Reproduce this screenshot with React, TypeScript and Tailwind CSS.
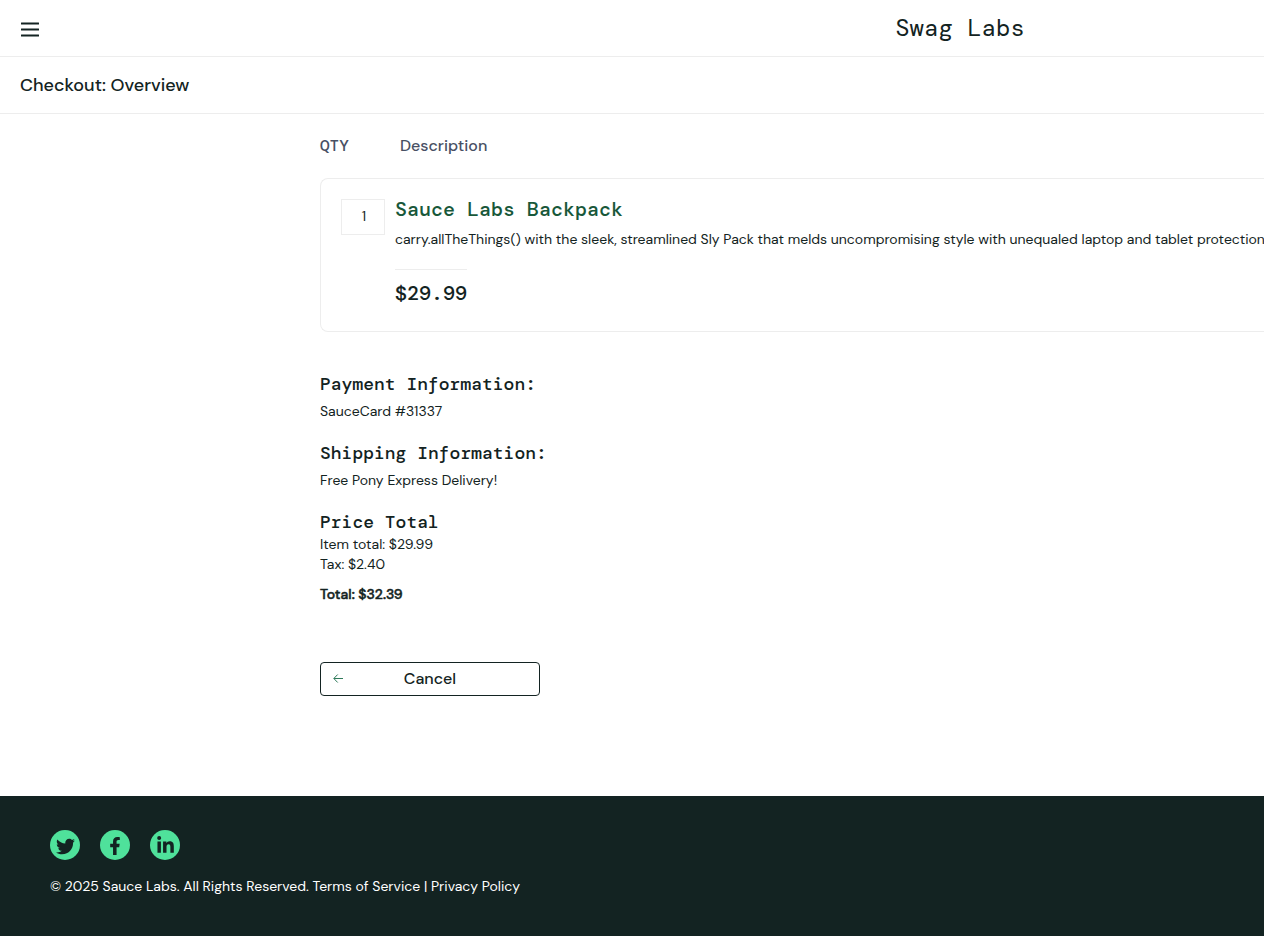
import { FaFacebookF, FaLinkedinIn, FaTwitter } from "react-icons/fa";

const mono = "font-['DM_Mono','Liberation_Mono',monospace]";

const socials = [
  { label: "Twitter", href: "#twitter", icon: <FaTwitter size={19} className="mt-0.5" /> },
  { label: "Facebook", href: "#facebook", icon: <FaFacebookF size={18} className="mt-0.5" /> },
  { label: "LinkedIn", href: "#linkedin", icon: <FaLinkedinIn size={19} /> },
];

function Header() {
  return (
    <header>
      <div className="grid h-[57px] grid-cols-2 items-center border-b border-[#ededed]">
        <button type="button" aria-label="Open Menu" className="mt-0.5 ml-5 w-5">
          <svg viewBox="0 0 20 16" className="h-4 w-5" fill="#132322" aria-hidden="true">
            <rect x="1" y="1.4" width="18" height="2.2" rx="0.4" />
            <rect x="1" y="7.4" width="18" height="2.2" rx="0.4" />
            <rect x="1" y="13.4" width="18" height="2.2" rx="0.4" />
          </svg>
        </button>
        <div className={`${mono} pl-6 text-center text-2xl`}>Swag Labs</div>
      </div>
      <div className="flex h-[57px] items-center border-b border-[#ededed] px-5">
        <h1 className="text-lg font-medium">Checkout: Overview</h1>
      </div>
    </header>
  );
}

function CartItem() {
  return (
    <article className="flex gap-2.5 overflow-hidden rounded-l-lg border border-r-0 border-[#ededed] py-5 pl-5">
      <div className="flex h-9 w-11 shrink-0 items-center justify-center border border-[#ededed] pb-0.5 pl-0.5 text-sm">
        1
      </div>
      <div className="min-w-0">
        <a href="#item" className={`${mono} block text-xl leading-5 font-medium text-[#18583a]`}>
          Sauce Labs Backpack
        </a>
        <p className="mt-2.5 text-sm leading-5 whitespace-nowrap">
          carry.allTheThings() with the sleek, streamlined Sly Pack that melds uncompromising style with unequaled laptop
          and tablet protection
        </p>
        <div
          className={`${mono} mt-5 w-fit border-t border-[#ededed] pt-2.5 pb-[5px] text-xl leading-[26px] font-medium`}
        >
          $29.99
        </div>
      </div>
    </article>
  );
}

function Summary() {
  const heading = `${mono} text-lg leading-5 font-medium`;
  return (
    <section className="pt-[42px] text-sm leading-5">
      <h2 className={heading}>Payment Information:</h2>
      <p className="mt-[7px]">SauceCard #31337</p>
      <h2 className={`${heading} mt-[22px]`}>Shipping Information:</h2>
      <p className="mt-[7px]">Free Pony Express Delivery!</p>
      <h2 className={`${heading} mt-[22px]`}>Price Total</h2>
      <p className="mt-0.5">Item total: $29.99</p>
      <p>Tax: $2.40</p>
      <p className="mt-2.5 font-medium [-webkit-text-stroke:0.5px_currentColor]">Total: $32.39</p>
    </section>
  );
}

export default function App() {
  return (
    <div className="flex min-h-screen flex-col bg-white font-['DM_Sans',Inter,sans-serif] text-[#132322]">
      <Header />
      <main className="flex-1 pb-[100px] pl-80">
        <div className="flex h-16 items-center font-medium text-[#485064]">
          <span className={`${mono} w-20`}>QTY</span>
          <span>Description</span>
        </div>
        <CartItem />
        <Summary />
        <button
          type="button"
          className="mt-[58px] grid h-[34px] w-[220px] grid-cols-[1fr_auto_1fr] items-center rounded border border-[#132322] px-3 font-medium"
        >
          <svg viewBox="0 0 10 10" className="h-2.5 w-2.5" fill="none" stroke="#2f7a5a" strokeWidth="1" aria-hidden="true">
            <path d="M10 4.5H1M4.7.5.8 4.5l3.9 4" />
          </svg>
          Cancel
        </button>
      </main>
      <footer className="h-[140px] bg-[#132322] px-[50px] pt-[34px] text-white">
        <ul className="flex gap-5">
          {socials.map((s) => (
            <li key={s.label}>
              <a
                href={s.href}
                aria-label={s.label}
                className="flex h-[30px] w-[30px] items-center justify-center rounded-full bg-[#4fe19b] text-[#132322]"
              >
                {s.icon}
              </a>
            </li>
          ))}
        </ul>
        <p className="mt-3 text-sm leading-7">
          © 2025 Sauce Labs. All Rights Reserved. Terms of Service | Privacy Policy
        </p>
      </footer>
    </div>
  );
}
